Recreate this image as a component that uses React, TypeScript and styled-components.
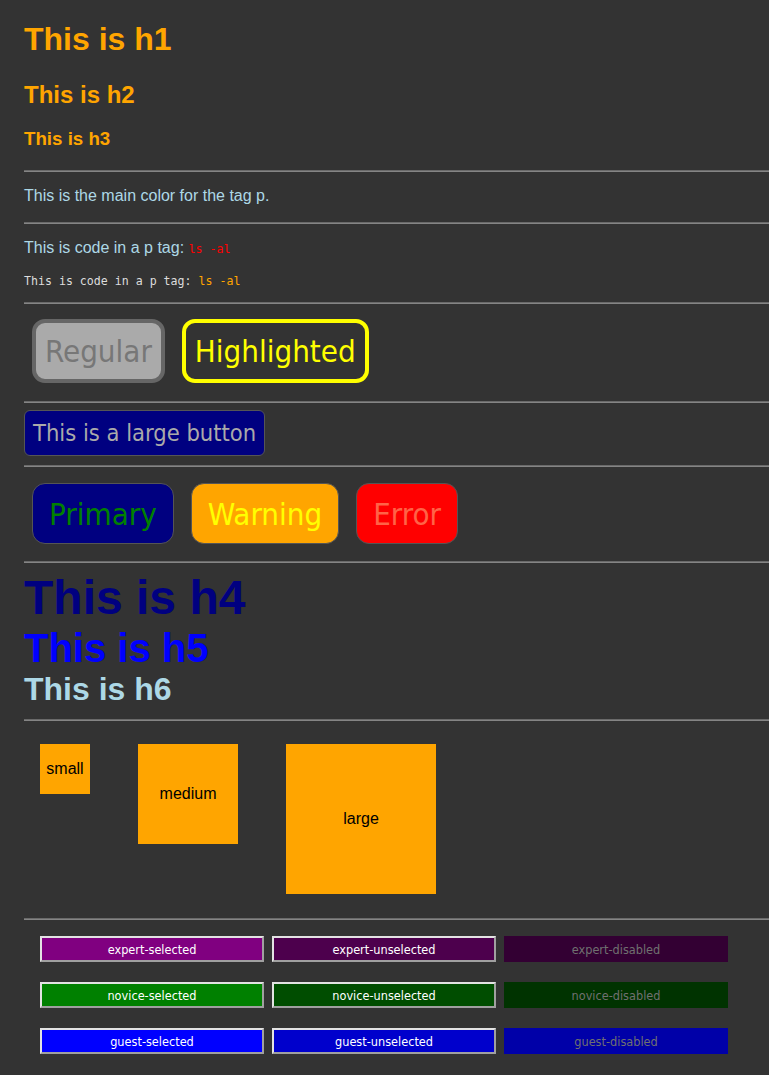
import React from 'react';
import styled, { createGlobalStyle } from 'styled-components';

const GlobalStyle = createGlobalStyle`
  html, body {
    margin: 0;
    padding: 0;
    background: #333333;
  }
  body {
    font-family: 'Liberation Sans', Arial, sans-serif;
    overflow-x: hidden;
  }
`;

const uiFont = `'DejaVu Sans Condensed', 'DejaVu Sans', sans-serif`;
const monoFont = `'DejaVu Sans Mono', 'Liberation Mono', monospace`;

const Page = styled.div`
  background: #333333;
  min-height: 1075px;
  padding-left: 24px;
  box-sizing: border-box;
`;

const Rule = styled.hr`
  margin: 0;
  height: 0;
  border: none;
  border-top: 1px solid #6a6a6a;
  border-bottom: 1px solid #858585;
`;

const Section = styled.div<{ $top: number; $bottom: number }>`
  padding-top: ${p => p.$top}px;
  padding-bottom: ${p => p.$bottom}px;
  display: flow-root;
`;

const Heading = styled.div<{ $size: number; $color: string; $gap?: number }>`
  font-family: 'Liberation Sans', Arial, sans-serif;
  font-weight: 700;
  font-size: ${p => p.$size}px;
  line-height: 1.15;
  color: ${p => p.$color};
  margin: ${p => p.$gap || 0}px 0 0;
`;

const Text = styled.p`
  margin: 0;
  font-size: 16px;
  line-height: 1.15;
  color: #add8e6;
`;

const Code = styled.code<{ $color: string }>`
  font-family: ${monoFont};
  font-size: 11.6px;
  color: ${p => p.$color};
`;

const MonoLine = styled.p`
  margin: 17px 0 0;
  font-family: ${monoFont};
  font-size: 11.6px;
  line-height: 1.15;
  color: #dddddd;
`;

const ButtonRow = styled.div<{ $indent: number; $gap: number }>`
  display: flex;
  align-items: flex-start;
  gap: ${p => p.$gap}px;
  padding-left: ${p => p.$indent}px;
`;

const BigButton = styled.button<{ $highlighted?: boolean }>`
  box-sizing: border-box;
  font-family: ${uiFont};
  font-size: 31px;
  line-height: 36px;
  height: 64px;
  padding: 0 9px;
  border-radius: 13px;
  border: 4px solid ${p => (p.$highlighted ? '#ffff00' : '#666666')};
  background: ${p => (p.$highlighted ? 'transparent' : '#aaaaaa')};
  color: ${p => (p.$highlighted ? '#ffff00' : '#777777')};
  cursor: pointer;
`;

const LargeButton = styled.button`
  box-sizing: border-box;
  font-family: ${uiFont};
  font-size: 23.5px;
  height: 46px;
  padding: 0 8px;
  border-radius: 6px;
  border: 1px solid #555555;
  background: #000080;
  color: #aaaaaa;
  cursor: pointer;
`;

const StatusButton = styled.button<{ $bg: string; $fg: string }>`
  box-sizing: border-box;
  font-family: ${uiFont};
  font-size: 31px;
  height: 61px;
  padding: 0 16px;
  border-radius: 13px;
  border: 1px solid #555555;
  background: ${p => p.$bg};
  color: ${p => p.$fg};
  cursor: pointer;
`;

const Boxes = styled.div`
  display: flex;
  align-items: flex-start;
  gap: 48px;
  padding-left: 16px;
`;

const Box = styled.div<{ $size: number }>`
  width: ${p => p.$size}px;
  height: ${p => p.$size}px;
  background: #ffa500;
  color: #000000;
  font-size: 16px;
  display: flex;
  align-items: center;
  justify-content: center;
`;

const NavGrid = styled.div`
  display: grid;
  grid-template-columns: repeat(3, 224px);
  column-gap: 8px;
  row-gap: 20px;
  padding-left: 16px;
`;

const NavButton = styled.button<{ $bg: string; $disabled?: boolean }>`
  box-sizing: border-box;
  font-family: ${uiFont};
  font-size: 12.6px;
  height: 26px;
  padding: 0;
  background: ${p => p.$bg};
  color: ${p => (p.$disabled ? '#707070' : '#ffffff')};
  border: 2px solid ${p => p.$bg};
  ${p =>
    !p.$disabled &&
    `
    border-top-color: #e3e3e3;
    border-left-color: #e3e3e3;
    border-right-color: #a0a0a0;
    border-bottom-color: #a0a0a0;
  `}
`;

const roles = [
  { name: 'expert', colors: ['#800080', '#4d004d', '#330033'] },
  { name: 'novice', colors: ['#008000', '#004d00', '#003300'] },
  { name: 'guest', colors: ['#0000ff', '#0000cc', '#0000a8'] },
];

const states = ['selected', 'unselected', 'disabled'];

export default function App() {
  return (
    <>
      <GlobalStyle />
      <Page>
        <Section $top={21} $bottom={20}>
          <Heading $size={32} $color="#ffa500">This is h1</Heading>
          <Heading $size={24} $color="#ffa500" $gap={23}>This is h2</Heading>
          <Heading $size={18.72} $color="#ffa500" $gap={20}>This is h3</Heading>
        </Section>
        <Rule />
        <Section $top={15} $bottom={17}>
          <Text>This is the main color for the tag p.</Text>
        </Section>
        <Rule />
        <Section $top={15} $bottom={14}>
          <Text>
            This is code in a p tag: <Code $color="#ff0000">ls -al</Code>
          </Text>
          <MonoLine>
            This is code in a p tag: <Code $color="#ffa500">ls -al</Code>
          </MonoLine>
        </Section>
        <Rule />
        <Section $top={15} $bottom={18}>
          <ButtonRow $indent={8} $gap={17}>
            <BigButton>Regular</BigButton>
            <BigButton $highlighted>Highlighted</BigButton>
          </ButtonRow>
        </Section>
        <Rule />
        <Section $top={7} $bottom={9}>
          <LargeButton>This is a large button</LargeButton>
        </Section>
        <Rule />
        <Section $top={16} $bottom={17}>
          <ButtonRow $indent={8} $gap={17}>
            <StatusButton $bg="#000080" $fg="#008000">Primary</StatusButton>
            <StatusButton $bg="#ffa500" $fg="#ffff00">Warning</StatusButton>
            <StatusButton $bg="#ff0000" $fg="#ff6347">Error</StatusButton>
          </ButtonRow>
        </Section>
        <Rule />
        <Section $top={7} $bottom={11}>
          <Heading $size={48} $color="#000080">This is h4</Heading>
          <Heading $size={40} $color="#0000ff">This is h5</Heading>
          <Heading $size={32} $color="#add8e6">This is h6</Heading>
        </Section>
        <Rule />
        <Section $top={23} $bottom={24}>
          <Boxes>
            <Box $size={50}>small</Box>
            <Box $size={100}>medium</Box>
            <Box $size={150}>large</Box>
          </Boxes>
        </Section>
        <Rule />
        <Section $top={16} $bottom={20}>
          <NavGrid>
            {roles.map(role =>
              states.map((state, i) => (
                <NavButton
                  key={role.name + state}
                  $bg={role.colors[i]}
                  $disabled={state === 'disabled'}
                >
                  {role.name}-{state}
                </NavButton>
              ))
            )}
          </NavGrid>
        </Section>
      </Page>
    </>
  );
}
